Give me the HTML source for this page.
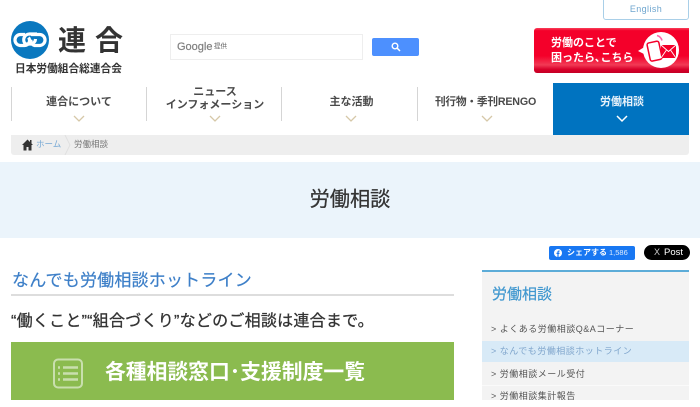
<!DOCTYPE html>
<html lang="ja"><head><meta charset="utf-8"><title>労働相談</title>
<style>
html,body{margin:0;padding:0;background:#fff}
body{width:700px;height:400px;overflow:hidden;position:relative;font-family:"Liberation Sans","Noto Sans CJK JP",sans-serif;color:#333}
.a{position:absolute;white-space:nowrap}
.nav{position:absolute;top:87px;height:34px;width:1px;background:#d5d5d5}
.ni{position:absolute;top:83px;height:52px;text-align:center;font-weight:700;font-size:11px;line-height:14px;color:#4a4a4a;white-space:nowrap}
.ni span{position:absolute;left:0;right:0}
.ni svg{position:absolute;top:32px;left:50%;margin-left:-6px}
.li{position:absolute;left:482px;width:207px;height:22px;line-height:22px;font-size:9px;letter-spacing:.5px;color:#555;padding-left:9px;box-sizing:border-box;white-space:nowrap}
</style></head><body>

<svg class="a" style="left:11px;top:21px" width="38" height="38" viewBox="0 0 38 38">
<circle cx="19" cy="19" r="19" fill="#0a78bf"/>
<g fill="none" stroke="#fff" stroke-width="3.200">
<path d="M14 13.500H10a5.500 5.500 0 0 0-1 11h4.500a5 5 0 0 0 4-8"/>
<path d="M26 13H18.500a5.800 5.800 0 0 0-4 10h6a5.500 5.500 0 0 0 4-5"/>
<path d="M20 13.500h8a5.500 5.500 0 0 1 1 11h-5.500a5 5 0 0 1-3.500-6"/>
</g></svg>
<div class="a" style="left:58px;top:22px;font-size:28px;line-height:38px;font-weight:700;color:#333;letter-spacing:9px">連合</div>
<div class="a" style="left:15px;top:62px;font-size:10.700px;line-height:14px;font-weight:700;color:#333">日本労働組合総連合会</div>

<div class="a" style="left:170px;top:34px;width:193px;height:26px;border:1px solid #eee;box-sizing:border-box"></div>
<div class="a" style="left:177px;top:40px;font-size:11px;line-height:14px;color:#808080;-webkit-text-stroke:.2px #808080">Google</div>
<div class="a" style="left:214px;top:42px;font-size:6.500px;line-height:10px;color:#666">提供</div>
<div class="a" style="left:372px;top:38px;width:47px;height:18px;background:#4d90fe;border-radius:2px"></div>
<svg class="a" style="left:391px;top:42px" width="10" height="10" viewBox="0 0 10 10"><circle cx="4" cy="4" r="2.800" fill="none" stroke="#fff" stroke-width="1.400"/><path d="M6 6l3 3" stroke="#fff" stroke-width="1.500"/></svg>

<div class="a" style="left:603px;top:-6px;width:86px;height:26px;border:1px solid #a9cfe8;border-radius:3px;box-sizing:border-box"></div>
<div class="a" style="left:603px;top:3px;width:86px;text-align:center;font-size:9px;line-height:13px;letter-spacing:.4px;color:#6fa6cf">English</div>

<div class="a" style="left:534px;top:28px;width:155px;height:45px;border-radius:3px 0 0 3px;background:linear-gradient(#f8415a 0,#f4002a 6%,#f4002a 62%,#f23a55 82%,#d8002a 92%,#c40025 100%)"></div>
<div class="a" style="left:551px;top:36px;font-size:11px;line-height:15px;font-weight:700;color:#fff">労働のことで<br>困ったら､こちら</div>
<svg class="a" style="left:638px;top:31px" width="52" height="40" viewBox="0 0 52 40">
<circle cx="23" cy="19" r="18" fill="#fff"/><path d="M0 20l8-5v9z" fill="#fff"/>
<rect x="10.500" y="11" width="12" height="18.500" rx="2" fill="#fff" stroke="#f4002a" stroke-width="1.500" transform="rotate(-12 16 20)"/>
<rect x="23" y="14" width="15" height="13" fill="#f4002a"/><path d="M23 14l7.500 6.500 7.500-6.500M23 27l5.500-8M38 27l-5.500-8" fill="none" stroke="#fff" stroke-width=".9"/>
<path d="M19 4.500a7 7 0 0 1 5 5" fill="none" stroke="#f28" stroke-width="1.500" opacity=".7"/>
</svg>

<div class="nav" style="left:11px"></div><div class="nav" style="left:146px"></div><div class="nav" style="left:281px"></div><div class="nav" style="left:417px"></div>

<div class="ni" style="left:12px;width:134px"><span style="top:12px">連合について</span><svg width="12" height="8" viewBox="0 0 12 8"><path d="M1 1l5 5 5-5" fill="none" stroke="#d6c8a8" stroke-width="1.300"/></svg></div>
<div class="ni" style="left:148px;width:134px"><span style="top:3px;line-height:13px">ニュース<br>インフォメーション</span><svg width="12" height="8" viewBox="0 0 12 8"><path d="M1 1l5 5 5-5" fill="none" stroke="#d6c8a8" stroke-width="1.300"/></svg></div>
<div class="ni" style="left:284px;width:135px"><span style="top:12px">主な活動</span><svg style="margin-left:-7px" width="12" height="8" viewBox="0 0 12 8"><path d="M1 1l5 5 5-5" fill="none" stroke="#d6c8a8" stroke-width="1.300"/></svg></div>
<div class="ni" style="left:418px;width:135px"><span style="top:12px;font-size:10.700px;letter-spacing:-.2px">刊行物・季刊RENGO</span><svg style="margin-left:-5px" width="12" height="8" viewBox="0 0 12 8"><path d="M1 1l5 5 5-5" fill="none" stroke="#d6c8a8" stroke-width="1.300"/></svg></div>
<div class="ni" style="left:553px;width:136px;background:#0073c0;color:#e8f2fa"><span style="top:12px;left:2px">労働相談</span><svg style="margin-left:-5px" width="12" height="8" viewBox="0 0 12 8"><path d="M1 1l5 5 5-5" fill="none" stroke="#fff" stroke-width="1.500"/></svg></div>

<div class="a" style="left:11px;top:135px;width:678px;height:20px;background:#eee;border-radius:0 0 3px 3px"></div>
<svg class="a" style="left:22px;top:139px" width="11" height="12" viewBox="0 0 11 12"><path d="M5.500 .5L0 6h1.500v5.500h3V8h2v3.500h3V6H11L9.500 4.500V1H8v2z" fill="#333"/></svg>
<div class="a" style="left:36px;top:138px;font-size:8.500px;line-height:13px;color:#76a8d4">ホーム</div>
<svg class="a" style="left:64px;top:135px" width="8" height="20" viewBox="0 0 8 20"><path d="M1 0l5 10-5 10" fill="none" stroke="#e0e0e0"/></svg>
<div class="a" style="left:74px;top:138px;font-size:8.500px;line-height:13px;color:#777">労働相談</div>

<div class="a" style="left:0;top:162px;width:700px;height:76px;background:#ebf4fb"></div>
<div class="a" style="left:0;top:185px;width:700px;text-align:center;font-size:20.200px;line-height:30px;color:#333;-webkit-text-stroke:.25px #333">労働相談</div>

<div class="a" style="left:549px;top:246px;width:86px;height:14px;background:#1877f2;border-radius:2px"></div>
<svg class="a" style="left:554px;top:249px" width="8" height="8" viewBox="0 0 8 8"><circle cx="4" cy="4" r="4" fill="#fff"/><path d="M3.400 8V5H2.500V3.800h.9V3c0-1 .6-1.500 1.400-1.500h.8v1.100h-.5c-.4 0-.5.2-.5.500v.7h1L5.400 5h-.8v3z" fill="#1877f2"/></svg>
<div class="a" style="left:567px;top:246px;font-size:8px;line-height:14px;font-weight:700;color:#fff">シェアする</div>
<div class="a" style="left:609px;top:246px;font-size:7.500px;line-height:14px;color:#dcebfd">1,586</div>
<div class="a" style="left:644px;top:245px;width:46px;height:15px;background:#000;border-radius:8px"></div>
<div class="a" style="left:654px;top:245px;font-size:9px;line-height:15px;color:#ccc">X</div>
<div class="a" style="left:664px;top:245px;font-size:9.500px;line-height:15px;color:#fff">Post</div>

<div class="a" style="left:12px;top:269px;font-size:17px;line-height:24px;letter-spacing:.2px;color:#3d7fc8;-webkit-text-stroke:.2px #3d7fc8">なんでも労働相談ホットライン</div>
<div class="a" style="left:11px;top:294px;width:443px;height:2px;background:#ddd"></div>
<div class="a" style="left:11px;top:310px;font-size:16px;line-height:24px;color:#333;letter-spacing:.25px;-webkit-text-stroke:.3px #333">“働くこと”“組合づくり”などのご相談は連合まで。</div>
<div class="a" style="left:11px;top:342px;width:443px;height:58px;background:#8bbb4f"></div>
<svg class="a" style="left:52px;top:358px" width="32" height="31" viewBox="0 0 32 31" fill="none" stroke="#c9dfae"><rect x="2" y="1.500" width="28" height="28" rx="4" stroke-width="2"/><path d="M6 9.500h2M11 9.500h15M6 15.500h2M11 15.500h15M6 21.500h2M11 21.500h15" stroke-width="2.500"/></svg>
<div class="a" style="left:105px;top:358px;font-size:20.800px;line-height:30px;font-weight:700;color:#fff">各種相談窓口･支援制度一覧</div>

<div class="a" style="left:482px;top:270px;width:207px;height:130px;background:#f3f3f3;border-top:2px solid #5cacd8;box-sizing:border-box"></div>
<div class="a" style="left:492px;top:284px;font-size:15px;line-height:22px;color:#3f97cf;-webkit-text-stroke:.2px #3f97cf">労働相談</div>
<div class="li" style="top:318px">&gt; よくある労働相談Q&amp;Aコーナー</div>
<div class="li" style="top:341px;height:21px;line-height:21px;background:#d8eaf7;color:#7fa5cc">&gt; なんでも労働相談ホットライン</div>
<div class="li" style="top:363px">&gt; 労働相談メール受付</div>
<div class="a" style="left:482px;top:385px;width:207px;height:1px;background:#fafafa"></div>
<div class="li" style="top:385px">&gt; 労働相談集計報告</div>
</body></html>
